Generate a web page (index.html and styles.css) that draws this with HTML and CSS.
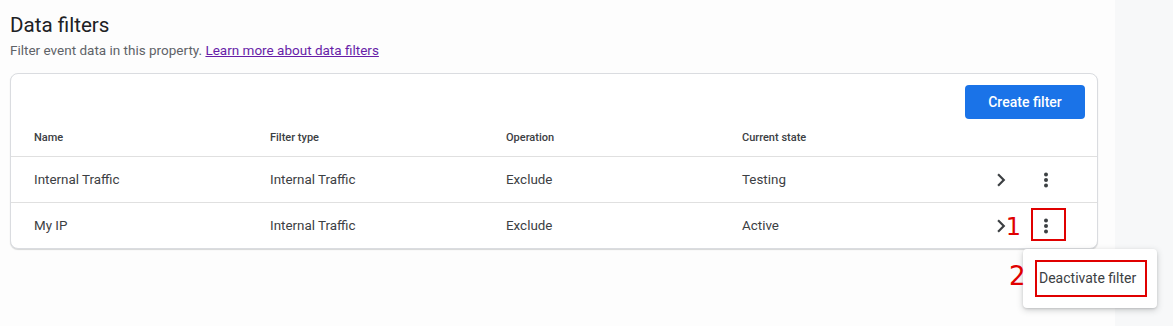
FILE: index.html
```html
<!DOCTYPE html>
<html lang="en">
<head>
  <meta charset="utf-8">
  <title>Data filters</title>
  <link rel="stylesheet" href="styles.css">
</head>
<body>
  <div class="page">
    <div class="main">
      <h1>Data filters</h1>
      <p class="intro">Filter event data in this property. <a href="#">Learn more about data filters</a></p>

      <div class="card">
        <div class="toolbar">
          <button class="blue-button">Create filter</button>
        </div>
        <div class="row head">
          <div>Name</div>
          <div>Filter type</div>
          <div>Operation</div>
          <div>Current state</div>
          <div></div>
        </div>
        <div class="row">
          <div>Internal Traffic</div>
          <div>Internal Traffic</div>
          <div>Exclude</div>
          <div>Testing</div>
          <div class="actions">
            <span class="icon chevron">
              <svg viewBox="0 0 24 24" width="26" height="26"><path d="M10 6L8.59 7.41 13.17 12l-4.58 4.59L10 18l6-6z"/></svg>
            </span>
            <span class="icon kebab">
              <svg viewBox="0 0 24 24" width="24" height="24"><circle cx="12" cy="6.5" r="2"/><circle cx="12" cy="12" r="2"/><circle cx="12" cy="17.5" r="2"/></svg>
            </span>
          </div>
        </div>
        <div class="row last">
          <div>My IP</div>
          <div>Internal Traffic</div>
          <div>Exclude</div>
          <div>Active</div>
          <div class="actions">
            <span class="icon chevron">
              <svg viewBox="0 0 24 24" width="26" height="26"><path d="M10 6L8.59 7.41 13.17 12l-4.58 4.59L10 18l6-6z"/></svg>
            </span>
            <span class="icon kebab marked">
              <span class="step step-one">1</span>
              <svg viewBox="0 0 24 24" width="24" height="24"><circle cx="12" cy="6.5" r="2"/><circle cx="12" cy="12" r="2"/><circle cx="12" cy="17.5" r="2"/></svg>
              <div class="menu">
                <span class="step step-two">2</span>
                <div class="menu-item">Deactivate filter</div>
              </div>
            </span>
          </div>
        </div>
      </div>
    </div>
    <div class="side"></div>
  </div>
</body>
</html>
```

FILE: styles.css
```css
body {
  margin: 0;
  font-family: Roboto, "Liberation Sans", Arial, sans-serif;
  color: #3c4043;
  background-color: #fdfdfd;
}

.page {
  display: flex;
  height: 326px;
  overflow: hidden;
}

.main {
  width: 1115px;
  padding: 13px 0 0 10px;
  box-sizing: border-box;
}

.side {
  flex: 1;
  background-color: #f7f8f9;
}

h1 {
  margin: 0;
  font-size: 20.6px;
  line-height: 24px;
  font-weight: 400;
  color: #202124;
}

.intro {
  margin: 3px 0 0;
  font-size: 13.5px;
  line-height: 20px;
  color: #5f6368;
}

.intro a {
  color: #681da8;
}

.card {
  margin-top: 13px;
  width: 1088px;
  box-sizing: border-box;
  border: 1px solid #dadce0;
  border-radius: 8px;
  background-color: #fff;
  box-shadow: 0 1px 1px rgba(60, 64, 67, 0.2);
}

.toolbar {
  display: flex;
  justify-content: flex-end;
  padding: 11px 12px 0 0;
}

.blue-button {
  width: 120px;
  height: 34px;
  border: none;
  border-radius: 4px;
  background-color: #1a73e8;
  color: white;
  font-family: Roboto, "Liberation Sans", Arial, sans-serif;
  font-size: 14px;
  font-weight: 500;
  cursor: pointer;
}

.row {
  display: grid;
  grid-template-columns: 236px 236px 236px 236px 1fr;
  align-items: center;
  padding-left: 23px;
  height: 45px;
  font-size: 13.4px;
  border-bottom: 1px solid #e0e0e0;
}

.row.head {
  height: 37px;
  font-size: 11px;
  font-weight: 500;
}

.row.last {
  border-bottom: none;
}

.actions {
  display: flex;
  align-items: center;
  height: 100%;
}

.icon {
  display: flex;
  align-items: center;
  justify-content: center;
  fill: #3c4043;
}

.chevron {
  margin-left: 10px;
}

.kebab {
  margin-left: 20px;
  width: 24px;
  height: 24px;
}

.marked {
  position: relative;
}

.marked::after {
  content: "";
  position: absolute;
  left: -3px;
  right: -8px;
  top: -6px;
  bottom: -3px;
  border: 2px solid #e00000;
}

.step {
  position: absolute;
  color: #e00000;
  font-family: "DejaVu Sans", sans-serif;
  line-height: 1;
}

.step-one {
  right: 100%;
  margin-right: 13px;
  top: 1px;
  font-size: 24px;
}

.step-two {
  left: -14px;
  top: 14px;
  font-size: 26px;
  z-index: 2;
}

.menu {
  position: absolute;
  left: -11px;
  top: 35px;
  width: 134px;
  height: 59px;
  box-sizing: border-box;
  padding: 11px 0 0 12px;
  background-color: #fff;
  border-radius: 4px;
  box-shadow: 0 2px 6px rgba(60, 64, 67, 0.25), 0 1px 2px rgba(60, 64, 67, 0.15);
  z-index: 1;
}

.menu-item {
  width: 112px;
  height: 37px;
  box-sizing: border-box;
  border: 2px solid #e00000;
  padding-left: 2px;
  font-size: 14px;
  line-height: 33px;
  color: #3c4043;
  white-space: nowrap;
}
```
